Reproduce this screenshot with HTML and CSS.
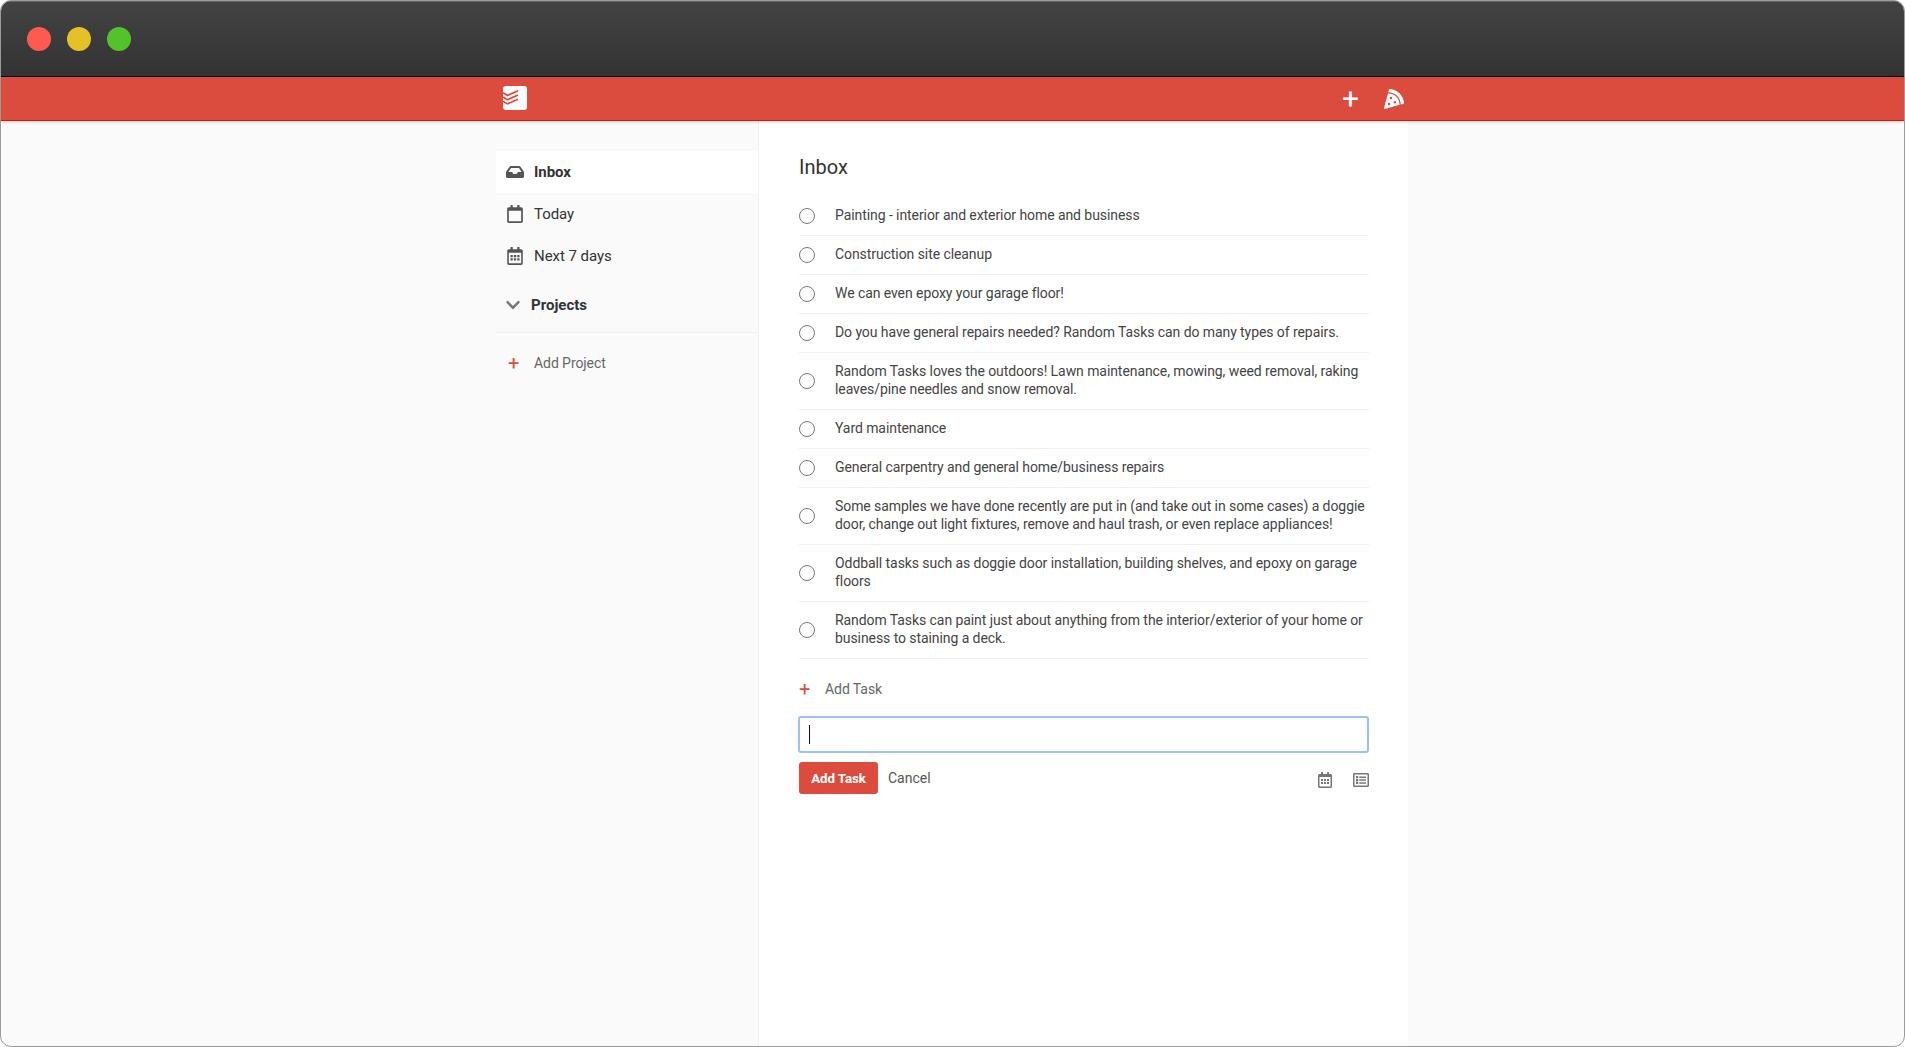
FILE: index.html
```html
<!DOCTYPE html>
<html lang="en">
<head>
<meta charset="utf-8">
<title>Inbox</title>
<link rel="stylesheet" href="styles.css">
</head>
<body>
<svg class="defs" width="0" height="0">
  <symbol id="cal" viewBox="0 0 448 512"><path d="M400 64h-48V12c0-6.600-5.400-12-12-12h-40c-6.600 0-12 5.400-12 12v52H160V12c0-6.600-5.400-12-12-12h-40c-6.600 0-12 5.400-12 12v52H48C21.500 64 0 85.500 0 112v352c0 26.500 21.500 48 48 48h352c26.500 0 48-21.500 48-48V112c0-26.500-21.500-48-48-48zm-6 400H54c-3.300 0-6-2.700-6-6V160h352v298c0 3.300-2.700 6-6 6z"/></symbol>
  <symbol id="cal-days" viewBox="0 0 448 512"><use href="#cal" width="448" height="512"/><path d="M96 224h64v64H96zM192 224h64v64h-64zM288 224h64v64h-64zM96 320h64v64H96zM192 320h64v64h-64zM288 320h64v64h-64z"/></symbol>
</svg>
<div class="window">
  <div class="titlebar"><i class="light red"></i><i class="light yellow"></i><i class="light green"></i></div>
  <header class="header">
    <nav class="header-inner">
      <svg class="logo" viewBox="0 0 24 24"><rect width="24" height="24" rx="3" fill="#fff"/><g fill="none" stroke="#db4c3f" stroke-width="1.700"><path d="M0 6.800L4.500 9.500L15 4.800"/><path d="M0 11L4.500 13.700L15 9"/><path d="M0 15.200L4.500 17.900L15 13.200"/></g></svg>
      <div class="actions">
        <button class="quick-add">+</button>
        <svg class="pizza" viewBox="0 0 512 512"><path d="M158.870.150c-16.160-1.520-31.200 8.420-35.330 24.120l-14.810 56.270c187.620 5.490 314.540 130.610 322.480 317l56.940-15.780c15.720-4.360 25.490-19.680 23.620-35.900C490.890 165.080 340.780 17.320 158.870.150zm-58.470 112L.55 491.640a16.210 16.210 0 0 0 20 19.750l379-105.100c-4.270-174.890-123.080-292.140-299.150-294.100zM128 416a32 32 0 1 1 32-32 32 32 0 0 1-32 32zm48-152a32 32 0 1 1 32-32 32 32 0 0 1-32 32zm104 104a32 32 0 1 1 32-32 32 32 0 0 1-32 32z"/></svg>
      </div>
    </nav>
  </header>
  <main class="page">
    <aside class="sidebar">
      <ul class="nav">
        <li class="active"><svg class="icon" viewBox="0 0 576 512"><path d="M567.938 243.908L462.250 85.374A48.003 48.003 0 0 0 422.311 64H153.689a48 48 0 0 0-39.938 21.374L8.062 243.908A47.994 47.994 0 0 0 0 270.533V400c0 26.510 21.490 48 48 48h480c26.510 0 48-21.490 48-48V270.533a47.994 47.994 0 0 0-8.062-26.625zM162.252 128h251.497l85.333 128H376l-32 64H232l-32-64H76.918l85.334-128z"/></svg><span>Inbox</span></li>
        <li><svg class="icon"><use href="#cal"/></svg><span>Today</span></li>
        <li><svg class="icon"><use href="#cal-days"/></svg><span>Next 7 days</span></li>
      </ul>
      <div class="projects"><svg class="chevron" viewBox="0 0 448 512"><path d="M207.029 381.476L12.686 187.132c-9.373-9.373-9.373-24.569 0-33.941l22.667-22.667c9.357-9.357 24.522-9.375 33.901-.040L224 284.505l154.745-154.021c9.379-9.335 24.544-9.317 33.901.040l22.667 22.667c9.373 9.373 9.373 24.569 0 33.941L240.971 381.476c-9.373 9.372-24.569 9.372-33.942 0z"/></svg><h2>Projects</h2></div>
      <div class="add-project"><span class="plus">+</span><span>Add Project</span></div>
    </aside>
    <section class="content">
      <h1>Inbox</h1>
      <ul class="tasks">
        <li><i class="check"></i><span>Painting - interior and exterior home and business</span></li>
        <li><i class="check"></i><span>Construction site cleanup</span></li>
        <li><i class="check"></i><span>We can even epoxy your garage floor!</span></li>
        <li><i class="check"></i><span>Do you have general repairs needed? Random Tasks can do many types of repairs.</span></li>
        <li><i class="check"></i><span>Random Tasks loves the outdoors! Lawn maintenance, mowing, weed removal, raking leaves/pine needles and snow removal.</span></li>
        <li><i class="check"></i><span>Yard maintenance</span></li>
        <li><i class="check"></i><span>General carpentry and general home/business repairs</span></li>
        <li><i class="check"></i><span>Some samples we have done recently are put in (and take out in some cases) a doggie door, change out light fixtures, remove and haul trash, or even replace appliances!</span></li>
        <li><i class="check"></i><span>Oddball tasks such as doggie door installation, building shelves, and epoxy on garage floors</span></li>
        <li><i class="check"></i><span>Random Tasks can paint just about anything from the interior/exterior of your home or business to staining a deck.</span></li>
      </ul>
      <div class="add-task"><span class="plus">+</span><span>Add Task</span></div>
      <div class="field"><i class="caret"></i></div>
      <div class="form-row">
        <button class="submit">Add Task</button><span class="cancel">Cancel</span>
        <svg class="tool" viewBox="0 0 448 512"><use href="#cal-days"/></svg>
        <svg class="tool list" viewBox="0 0 512 512"><path fill-rule="evenodd" d="M464 32H48C21.490 32 0 53.490 0 80v352c0 26.510 21.490 48 48 48h416c26.510 0 48-21.490 48-48V80c0-26.510-21.490-48-48-48zm-6 400H54a6 6 0 0 1-6-6V86a6 6 0 0 1 6-6h404a6 6 0 0 1 6 6v340a6 6 0 0 1-6 6z"/><path d="M200 140h216v48H200zM200 232h216v48H200zM200 324h216v48H200zM96 128h72v72H96zM96 220h72v72H96zM96 312h72v72H96z"/></svg>
      </div>
    </section>
  </main>
</div>
</body>
</html>
```
FILE: styles.css
```css
* { box-sizing: border-box; }
body { margin: 0; background: #fff; color: #333; font: 14px/18px Roboto, sans-serif; }
ul { list-style: none; margin: 0; padding: 0; }
h1, h2 { margin: 0; }
button { border: 0; padding: 0; font-family: inherit; }
.defs { position: absolute; }
svg { display: block; flex: none; }
.window { display: flex; flex-direction: column; height: 1047px; border: 1px solid #9b9b9b; border-radius: 11px; overflow: hidden; background: #fafafa; }
.titlebar { height: 76px; flex: none; display: flex; align-items: center; gap: 16px; padding-left: 26px; background: linear-gradient(#434343, #333); border-bottom: 1px solid #000; box-shadow: inset 0 1px #666; }
.light { width: 24px; height: 24px; border-radius: 50%; }
.red { background: #ff5a52; }
.yellow { background: #e6c029; }
.green { background: #54c22b; }
.header { height: 44px; flex: none; background: #db4c3f; border-bottom: 1px solid #c82100; box-shadow: 0 1px 3px rgba(0,0,0,.2); z-index: 1; }
.header-inner { width: 913px; margin: 0 auto; height: 42px; padding: 0 5px 0 7px; display: flex; justify-content: space-between; align-items: center; }
.logo { width: 24px; height: 24px; }
.actions { display: flex; align-items: center; gap: 24px; padding-top: 2px; }
.quick-add { background: none; color: #fff; font-size: 30px; line-height: 42px; width: 19px; }
.pizza { width: 20px; height: 20px; fill: #fff; }
.page { flex: 1; display: flex; width: 913px; margin: 0 auto; padding-right: 1px; }
.sidebar { width: 262px; flex: none; padding-top: 30px; }
.nav li { height: 42px; display: flex; align-items: center; gap: 10px; padding-left: 10px; font-size: 15px; letter-spacing: -.05px; }
.nav .active { background: #fff; font-weight: 700; }
.icon { width: 18px; height: 18px; fill: #555; }
.projects { display: flex; align-items: center; height: 56px; padding-left: 10px; gap: 11px; border-bottom: 1px solid #f0f0f0; }
.projects h2 { font-size: 15px; }
.chevron { width: 14px; height: 16px; fill: #777; }
.add-project { display: flex; align-items: center; margin-top: 21px; padding-left: 12px; color: #666; letter-spacing: -.07px; }
.plus { width: 26px; color: #db4c3f; font-size: 20px; }
.content { flex: 1; background: #fff; border-left: 1px solid #f1f1f1; padding: 34px 39px 0 40px; }
h1 { font-size: 20px; font-weight: 400; line-height: 25px; margin-bottom: 17px; }
.tasks li { display: flex; align-items: center; gap: 20px; padding: 10px 0; border-bottom: 1px solid #f0f0f0; color: #444; letter-spacing: -.073px; }
.tasks span { margin: -1px 0 1px; }
.check { width: 16px; height: 16px; flex: none; border: 1px solid #777; border-radius: 50%; }
.add-task { display: flex; align-items: center; height: 18px; margin-top: 21px; color: #666; letter-spacing: -.07px; }
.field { height: 37px; margin: 18px 0 9px -1px; border: 2px solid #9cc1f7; border-radius: 3px; padding: 7px 9px; }
.caret { display: block; width: 1px; height: 19px; background: #111; }
.form-row { display: flex; align-items: center; height: 32px; }
.submit { width: 79px; height: 32px; background: #db4c3f; color: #fff; border-radius: 3px; font-size: 13.333px; font-weight: 700; letter-spacing: -.1px; }
.cancel { margin: -1px auto 0 10px; color: #555; }
.tool { width: 14px; height: 16px; fill: #777; margin-top: 4px; }
.tool.list { width: 16px; margin-left: 21px; }
```
